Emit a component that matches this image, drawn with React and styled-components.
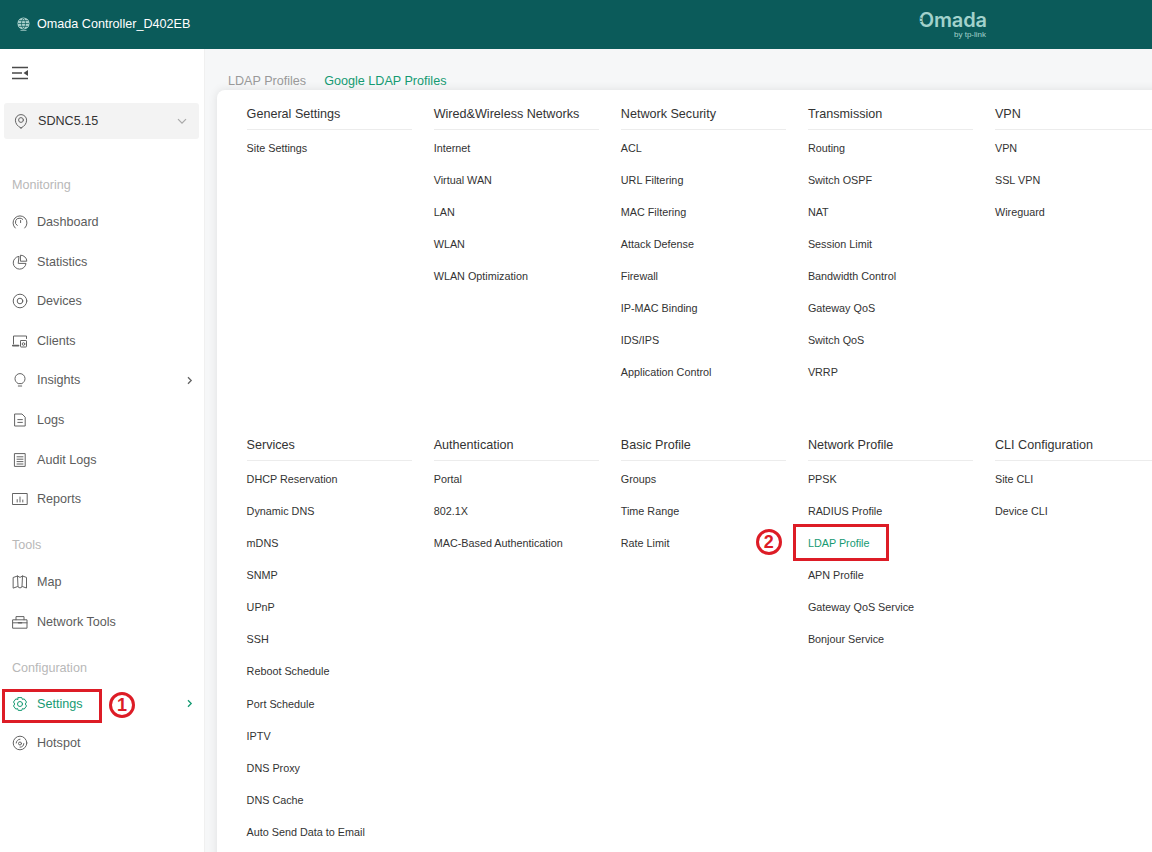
import React from "react";
import styled, { createGlobalStyle } from "styled-components";

const GlobalStyle = createGlobalStyle`
    html, body {
        margin: 0;
        padding: 0;
        height: 100%;
        overflow: hidden;
        font-family: "Liberation Sans", Arial, sans-serif;
    }
`;

const color = {
    header: "#0b5b5a",
    green: "#159a72",
    red: "#dd1c26",
    text: "#333333",
    side: "#5c5c5c",
    muted: "#b8b8b8",
    icon: "#636363",
};

const Page = styled.div`
    width: 1152px;
    height: 852px;
    display: flex;
    flex-direction: column;
    overflow: hidden;
    background: #f6f7f8;
`;

const Header = styled.header`
    flex: none;
    height: 49px;
    display: flex;
    align-items: center;
    background: ${color.header};
    color: #fff;
    padding-left: 17px;
    padding-bottom: 1px;
    box-sizing: border-box;
    position: relative;
`;

const HeaderTitle = styled.span`
    font-size: 12.6px;
    margin-left: 7px;
`;

const Logo = styled.div`
    position: absolute;
    left: 918px;
    top: 10px;
    width: 71px;
    color: #a2d2cc;
    display: flex;
    flex-direction: column;
    align-items: flex-end;
`;

const LogoWord = styled.span`
    font-family: "Inter", sans-serif;
    font-size: 20px;
    font-weight: 600;
    line-height: 20px;
    letter-spacing: -0.1px;
    margin-right: 2px;
`;

const LogoSub = styled.span`
    font-size: 8px;
    line-height: 7px;
    margin-top: 0.5px;
    margin-right: 3px;
`;

const LogoBreak = styled.svg`
    position: absolute;
    left: 1px;
    top: 2px;
`;

const Body = styled.div`
    flex: 1;
    display: flex;
    min-height: 0;
`;

const Sidebar = styled.aside`
    flex: none;
    width: 205px;
    box-sizing: border-box;
    background: #fff;
    border-right: 1px solid #f0f0f0;
    padding: 0 4px;
`;

const Toggle = styled.div`
    height: 48px;
    display: flex;
    align-items: center;
    padding-left: 8px;
`;

const SiteSelect = styled.div`
    margin-top: 6px;
    height: 36px;
    width: 195px;
    box-sizing: border-box;
    display: flex;
    align-items: center;
    padding: 0 12px 0 9px;
    border-radius: 3px;
    background: #f3f3f3;
    color: ${color.text};
    font-size: 12.6px;
`;

const SiteName = styled.span`
    flex: 1;
    margin-left: 9px;
`;

const GroupLabel = styled.div`
    height: 30px;
    line-height: 30px;
    padding-left: 8px;
    font-size: 12.6px;
    color: ${color.muted};
    margin-top: ${(p) => p.$top}px;
    margin-bottom: ${(p) => p.$bottom}px;
`;

const NavItem = styled.div`
    position: relative;
    height: 39.6px;
    display: flex;
    align-items: center;
    padding: 0 6px 0 8px;
    font-size: 12.6px;
    color: ${(p) => (p.$active ? color.green : color.side)};
`;

const NavText = styled.span`
    flex: 1;
    margin-left: 9px;
`;

const Callout = styled.div`
    position: absolute;
    left: ${(p) => p.$left}px;
    top: ${(p) => p.$top}px;
    width: ${(p) => p.$width}px;
    height: ${(p) => p.$height}px;
    box-sizing: border-box;
    border: 3px solid ${color.red};
    pointer-events: none;
`;

const Badge = styled.span`
    position: absolute;
    left: ${(p) => p.$left}px;
    top: ${(p) => p.$top}px;
    width: 26px;
    height: 26px;
    box-sizing: border-box;
    border: 3px solid ${color.red};
    border-radius: 50%;
    display: flex;
    align-items: center;
    justify-content: center;
    color: ${color.red};
    font-size: 18px;
    font-weight: 700;
`;

const Main = styled.main`
    flex: 1;
    min-width: 0;
    padding: 23px 0 0 12px;
`;

const Tabs = styled.div`
    height: 18px;
    display: flex;
    gap: 18px;
    padding-left: 11px;
    font-size: 12.6px;
    line-height: 19px;
`;

const Tab = styled.span`
    color: ${(p) => (p.$active ? color.green : "#999999")};
`;

const Panel = styled.div`
    width: 1000px;
    height: 800px;
    box-sizing: border-box;
    padding: 13px 0 0 29.6px;
    background: #fff;
    border-radius: 8px 0 0 0;
    box-shadow: 0 0 10px rgba(0, 0, 0, 0.1);
`;

const MenuGrid = styled.div`
    display: grid;
    grid-template-columns: repeat(5, 165.5px);
    grid-auto-rows: 331.15px;
    column-gap: 21.6px;
`;

const MenuColumn = styled.section`
    display: flex;
    flex-direction: column;
`;

const ColumnTitle = styled.div`
    font-size: 12.6px;
    line-height: 22px;
    color: ${color.text};
    padding-bottom: 4px;
    margin-bottom: 1.75px;
    border-bottom: 1px solid #ececec;
`;

const MenuItem = styled.div`
    position: relative;
    height: 32.1px;
    line-height: 32px;
    flex: none;
    font-size: 10.8px;
    white-space: nowrap;
    color: ${(p) => (p.$active ? color.green : color.text)};
`;

const Glyph = ({ size = 16, stroke = color.icon, children }) => (
    <svg
        width={size}
        height={size}
        viewBox="0 0 16 16"
        fill="none"
        stroke={stroke}
        strokeWidth="1"
        strokeLinecap="round"
        strokeLinejoin="round"
        style={{ flex: "none" }}
    >
        {children}
    </svg>
);

const icons = {
    dashboard: (
        <>
            <path d="M3.2 14 A7 7 0 1 1 12.8 14" />
            <path d="M5.2 11.5 A4 4 0 0 1 8 4.2 A4 4 0 0 1 10.8 5.4" />
            <path d="M8.6 6.5 L8.6 8.6" />
        </>
    ),
    statistics: (
        <>
            <path d="M6.6 2.4 A6.4 6.4 0 1 0 14 9.4 L6.6 9.4 Z" />
            <path d="M8.8 1.2 A6 6 0 0 1 14.8 7.2 L8.8 7.2 Z" fill="#fff" />
        </>
    ),
    devices: (
        <>
            <circle cx="8" cy="8" r="6.8" />
            <circle cx="8" cy="8" r="2.8" />
        </>
    ),
    clients: (
        <>
            <path d="M1.5 11 L1.5 3 L14.5 3 L14.5 5.5" />
            <path d="M0.8 12.6 L6.5 12.6" strokeWidth="1.8" />
            <rect x="8.5" y="7.5" width="6" height="6.5" rx="0.6" />
            <circle cx="11.5" cy="11" r="1.3" />
        </>
    ),
    insights: (
        <>
            <path d="M5.8 11.4 C4.2 10.4 3 8.8 3 6.6 A5 5 0 0 1 13 6.6 C13 8.8 11.8 10.4 10.2 11.4 Z" />
            <path d="M6.3 14 L9.7 14" />
        </>
    ),
    logs: (
        <>
            <path d="M3 2 L10 2 L13.2 5.2 L13.2 14 L3 14 Z" />
            <path d="M5.8 7.6 L10.4 7.6 M5.8 10.4 L10.4 10.4" />
        </>
    ),
    audit: (
        <>
            <rect x="2.8" y="1.6" width="10.4" height="12.8" />
            <path d="M5 4.8 L11 4.8 M5 7.2 L11 7.2 M5 9.6 L11 9.6 M5 12 L11 12" />
        </>
    ),
    reports: (
        <>
            <rect x="0.8" y="2.5" width="14.4" height="11" />
            <path d="M5.2 11 L5.2 8.6 M8 11 L8 6 M10.8 11 L10.8 9" />
        </>
    ),
    map: (
        <>
            <path d="M1.5 3.4 L5.5 2 L8 3.4 L10.5 2 L14.5 3.4 L14.5 14 L10.5 12.6 L8 14 L5.5 12.6 L1.5 14 Z" />
            <path d="M5.5 2 L6 12.6 M10.5 2 L10 12.6" />
        </>
    ),
    tools: (
        <>
            <rect x="1" y="5.8" width="14" height="8.4" />
            <path d="M4 5.8 L4 2.6 L12 2.6 L12 5.8" />
            <path d="M1 8.8 L15 8.8" />
            <path d="M6.5 8.8 L9.5 8.8" strokeWidth="1.6" />
        </>
    ),
    settings: (
        <>
            <path d="M6.2 1.6 L9.8 1.6 L10.4 3.4 L12.2 2.9 L14.5 6 L13.3 8 L14.5 10 L12.2 13.1 L10.4 12.6 L9.8 14.4 L6.2 14.4 L5.6 12.6 L3.8 13.1 L1.5 10 L2.7 8 L1.5 6 L3.8 2.9 L5.6 3.4 Z" />
            <circle cx="8" cy="8" r="2.5" />
        </>
    ),
    hotspot: (
        <>
            <circle cx="8" cy="8" r="6.8" />
            <circle cx="8" cy="8.5" r="1.5" />
            <path d="M4.2 8 A3.8 3.8 0 0 1 8 4.2" />
            <path d="M8 12.2 A3.8 3.8 0 0 0 11.8 8.6" />
        </>
    ),
};

const Chevron = ({ stroke }) => (
    <svg width="9" height="9" viewBox="0 0 9 9" fill="none" stroke={stroke} strokeWidth="1.3" style={{ flex: "none" }}>
        <path d="M3 1.2 L6.2 4.5 L3 7.8" />
    </svg>
);

const sideGroups = [
    {
        label: "Monitoring",
        top: 31,
        bottom: 2.2,
        items: [
            ["dashboard", "Dashboard"],
            ["statistics", "Statistics"],
            ["devices", "Devices"],
            ["clients", "Clients"],
            ["insights", "Insights", true],
            ["logs", "Logs"],
            ["audit", "Audit Logs"],
            ["reports", "Reports"],
        ],
    },
    {
        label: "Tools",
        top: 11,
        bottom: 2.2,
        items: [
            ["map", "Map"],
            ["tools", "Network Tools"],
        ],
    },
    {
        label: "Configuration",
        top: 11.6,
        bottom: 1.2,
        items: [
            ["settings", "Settings", true],
            ["hotspot", "Hotspot"],
        ],
    },
];

const menu = [
    ["General Settings", ["Site Settings"]],
    ["Wired&Wireless Networks", ["Internet", "Virtual WAN", "LAN", "WLAN", "WLAN Optimization"]],
    [
        "Network Security",
        ["ACL", "URL Filtering", "MAC Filtering", "Attack Defense", "Firewall", "IP-MAC Binding", "IDS/IPS", "Application Control"],
    ],
    [
        "Transmission",
        ["Routing", "Switch OSPF", "NAT", "Session Limit", "Bandwidth Control", "Gateway QoS", "Switch QoS", "VRRP"],
    ],
    ["VPN", ["VPN", "SSL VPN", "Wireguard"]],
    [
        "Services",
        [
            "DHCP Reservation",
            "Dynamic DNS",
            "mDNS",
            "SNMP",
            "UPnP",
            "SSH",
            "Reboot Schedule",
            "Port Schedule",
            "IPTV",
            "DNS Proxy",
            "DNS Cache",
            "Auto Send Data to Email",
        ],
    ],
    ["Authentication", ["Portal", "802.1X", "MAC-Based Authentication"]],
    ["Basic Profile", ["Groups", "Time Range", "Rate Limit"]],
    [
        "Network Profile",
        ["PPSK", "RADIUS Profile", "LDAP Profile", "APN Profile", "Gateway QoS Service", "Bonjour Service"],
    ],
    ["CLI Configuration", ["Site CLI", "Device CLI"]],
];

const App = () => {
    return (
        <Page>
            <GlobalStyle />
            <Header>
                <svg width="13" height="14" viewBox="0 0 13 14" fill="none" stroke="#a9cfcb" strokeWidth="1.1">
                    <circle cx="6.5" cy="6.5" r="5.5" fill="#a9cfcb" />
                    <path d="M1 6.5 H12 M6.5 1 C3.8 4 3.8 9 6.5 12 C9.2 9 9.2 4 6.5 1 M2 3.6 H11 M2 9.4 H11" stroke={color.header} strokeWidth="0.7" />
                    <path d="M3.5 13.4 H9.5" strokeWidth="0.8" />
                </svg>
                <HeaderTitle>Omada Controller_D402EB</HeaderTitle>
                <Logo>
                    <LogoWord>Omada</LogoWord>
                    <LogoSub>by tp-link</LogoSub>
                    <LogoBreak width="10" height="16" viewBox="0 0 10 16" fill="none" stroke={color.header} strokeWidth="0.9">
                        <path d="M2.6 2 L1 3.2 M0.8 6 L2.8 6.4 M0.8 9.6 L2.8 9.4 M2.6 13 L1 12" />
                    </LogoBreak>
                </Logo>
            </Header>
            <Body>
                <Sidebar>
                    <Toggle>
                        <svg width="16" height="14" viewBox="0 0 16 14" fill="none" stroke="#4a4a4a" strokeWidth="1.5">
                            <path d="M0 1.5 H16 M0 7 H10 M0 12.5 H16" />
                            <path d="M11.5 7 L16 4 V10 Z" fill="#4a4a4a" stroke="none" />
                        </svg>
                    </Toggle>
                    <SiteSelect>
                        <Glyph>
                            <path d="M8 15 C4.6 13.4 2.4 10.6 2.4 7.2 A5.6 5.6 0 0 1 13.6 7.2 C13.6 10.6 11.4 13.4 8 15 Z" />
                            <circle cx="8" cy="7" r="2.4" />
                        </Glyph>
                        <SiteName>SDNC5.15</SiteName>
                        <svg width="10" height="7" viewBox="0 0 10 7" fill="none" stroke="#a8a8a8" strokeWidth="1.2">
                            <path d="M1 1.2 L5 5.2 L9 1.2" />
                        </svg>
                    </SiteSelect>
                    {sideGroups.map((group) => (
                        <div key={group.label}>
                            <GroupLabel $top={group.top} $bottom={group.bottom}>
                                {group.label}
                            </GroupLabel>
                            {group.items.map(([icon, name, more]) => {
                                const active = name === "Settings";
                                return (
                                    <NavItem key={name} $active={active}>
                                        <Glyph stroke={active ? color.green : color.icon}>{icons[icon]}</Glyph>
                                        <NavText>{name}</NavText>
                                        {more && <Chevron stroke={active ? color.green : color.icon} />}
                                        {active && (
                                            <>
                                                <Callout $left={-2} $top={5} $width={100} $height={34} />
                                                <Badge $left={105} $top={8}>1</Badge>
                                            </>
                                        )}
                                    </NavItem>
                                );
                            })}
                        </div>
                    ))}
                </Sidebar>
                <Main>
                    <Tabs>
                        <Tab>LDAP Profiles</Tab>
                        <Tab $active>Google LDAP Profiles</Tab>
                    </Tabs>
                    <Panel>
                        <MenuGrid>
                            {menu.map(([title, items]) => (
                                <MenuColumn key={title}>
                                    <ColumnTitle>{title}</ColumnTitle>
                                    {items.map((item) => {
                                        const active = item === "LDAP Profile";
                                        return (
                                            <MenuItem key={item} $active={active}>
                                                {item}
                                                {active && (
                                                    <>
                                                        <Callout $left={-15} $top={-3} $width={96} $height={37} />
                                                        <Badge $left={-52} $top={2}>2</Badge>
                                                    </>
                                                )}
                                            </MenuItem>
                                        );
                                    })}
                                </MenuColumn>
                            ))}
                        </MenuGrid>
                    </Panel>
                </Main>
            </Body>
        </Page>
    );
};

export default App;
